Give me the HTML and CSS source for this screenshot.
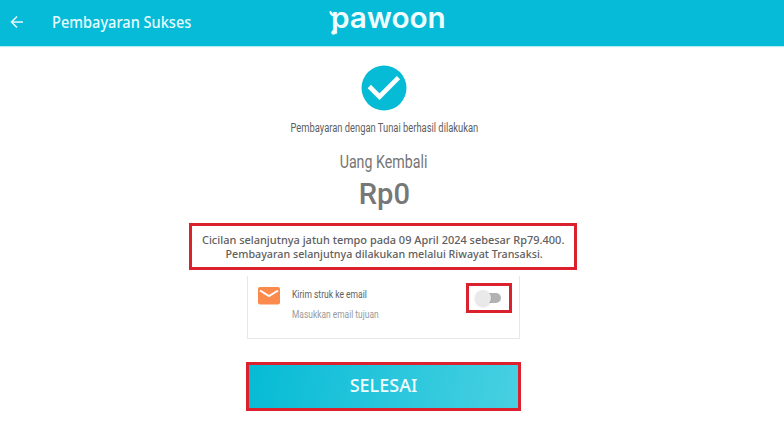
FILE: index.html
```
<!DOCTYPE html>
<html lang="id">
<head>
    <meta charset="UTF-8">
    <meta name="viewport" content="width=device-width, initial-scale=1.0">
    <title>Pembayaran Sukses</title>
    <link rel="stylesheet" href="styles.css">
</head>
<body>
    <header>
        <svg class="back" width="14" height="14" viewBox="0 0 14 14">
            <path d="M13 7H2M7 1.5L1.5 7L7 12.5" fill="none" stroke="#e4fbff" stroke-width="1.6"/>
        </svg>
        <h1>Pembayaran Sukses</h1>
        <div class="logo">
            <span>pawoon</span>
            <svg class="logo-tail" width="9" height="27" viewBox="0 0 9 27">
                <path d="M1.500 4Q2 7 6 7.500" fill="none" stroke="#f0fdff" stroke-width="2.200" stroke-linecap="round"/>
                <circle cx="4.500" cy="24.500" r="2.200" fill="#f0fdff"/>
            </svg>
        </div>
    </header>
    <main>
        <svg class="check" width="46" height="46" viewBox="0 0 46 46">
            <circle cx="23" cy="23" r="22.500" fill="#06bbd5"/>
            <path d="M8.300 21.500L18.500 31.700L37.500 12.700" fill="none" stroke="#fff" stroke-width="4.600"/>
        </svg>
        <p class="message"><span>Pembayaran dengan Tunai berhasil dilakukan</span></p>
        <p class="change-label"><span>Uang Kembali</span></p>
        <p class="change"><span>Rp0</span></p>
        <div class="notice">
            <p><span>Cicilan selanjutnya jatuh tempo pada 09 April 2024 sebesar Rp79.400.</span></p>
            <p><span>Pembayaran selanjutnya dilakukan melalui Riwayat Transaksi.</span></p>
        </div>
        <div class="card">
            <svg class="mail" width="22" height="18" viewBox="0 0 22 18">
                <rect width="22" height="17.500" rx="2" fill="#fb8a4c"/>
                <path d="M2 3.500L11 9L20 3.500" fill="none" stroke="#fff" stroke-width="2"/>
            </svg>
            <div class="card-text">
                <p class="card-title"><span>Kirim struk ke email</span></p>
                <p class="card-hint"><span>Masukkan email tujuan</span></p>
            </div>
            <div class="toggle-frame">
                <div class="toggle"></div>
            </div>
        </div>
        <button class="done"><span>SELESAI</span></button>
    </main>
</body>
</html>
```
FILE: styles.css
```
* {
    box-sizing: border-box;
}

body {
    margin: 0;
    height: 427px;
    overflow: hidden;
    background: #fff;
    font-family: Roboto, sans-serif;
    color: #606060;
}

p, h1 {
    margin: 0;
}

header {
    display: grid;
    grid-template-columns: 42px 278px 1fr;
    align-items: center;
    height: 46px;
    padding-left: 10px;
    background: #06bbd7;
    box-shadow: 0 1px 1px #b5ebf2;
}

.back {
    margin-top: -2px;
}

h1 {
    font: 500 15.5px/20px "Noto Sans", sans-serif;
    color: #e4fbff;
    white-space: nowrap;
    transform: translateY(-1px) scaleX(.94);
    transform-origin: left;
}

.logo {
    position: relative;
    height: 46px;
    font: 600 29px/36px Inter, sans-serif;
    color: #f0fdff;
}

.logo span {
    display: inline-block;
    margin-left: 1px;
    transform: scaleX(1.025);
    transform-origin: left;
}

.logo-tail {
    position: absolute;
    left: -1px;
    top: 8px;
}

main {
    display: flex;
    flex-direction: column;
    align-items: center;
    width: 767px;
    padding-top: 19px;
}

main p {
    white-space: nowrap;
}

main p span {
    display: inline-block;
}

.check {
    flex: none;
    margin-left: 1px;
}

.message {
    margin-top: 9px;
    font-size: 12px;
    line-height: 16px;
    margin-left: 2px;
}

.message span {
    transform: scaleX(.78);
}

.change-label {
    margin-top: 15px;
    font-size: 18px;
    line-height: 22px;
    color: #757575;
}

.change-label span {
    transform: scaleX(.79);
}

.change {
    margin-top: 4px;
    font-size: 30px;
    font-weight: 500;
    line-height: 34px;
    color: #777;
    margin-left: 2px;
}

.change span {
    transform: scaleX(.97);
}

.notice {
    display: flex;
    flex-direction: column;
    align-items: center;
    width: 388px;
    height: 47px;
    margin-top: 12px;
    margin-right: 1px;
    padding-top: 7px;
    border: 3px solid #db212d;
    font: 500 11.5px/13.5px "Noto Sans", sans-serif;
}

.notice span {
    transform: scaleX(.953);
}

.notice p + p span {
    transform: translateX(1px) scaleX(.932);
}

.card {
    display: flex;
    width: 273px;
    height: 63px;
    margin-top: 6px;
    padding-left: 10px;
    border: solid #e8e8e8;
    border-width: 0 1px 1px;
}

.mail {
    margin-top: 11px;
}

.card-text {
    width: 173px;
    margin-left: 12px;
    padding-top: 11px;
}

.card-text p {
    font-size: 11px;
    line-height: 16px;
}

.card-text span {
    transform: scaleX(.775);
    transform-origin: left;
}

.card-text .card-hint {
    margin-top: 4px;
    color: #999;
}

.card-text .card-hint span {
    transform: scaleX(.765);
}

.toggle-frame {
    width: 46px;
    height: 30px;
    margin: 7px 0 0 1px;
    padding: 7px 8px;
    border: 3px solid #db212d;
}

.toggle {
    position: relative;
    width: 24px;
    height: 10px;
    border-radius: 5px;
    background: #b2b2b2;
}

/* knob */
.toggle::before {
    content: "";
    position: absolute;
    left: -2px;
    top: -3px;
    width: 16px;
    height: 16px;
    border-radius: 50%;
    background: #e9e9e9;
    box-shadow: 0 1px 2px rgba(0,0,0,0.15);
}

.done {
    width: 275px;
    height: 49px;
    margin-top: 23px;
    padding: 0;
    border: 3px solid #db212d;
    background: linear-gradient(100deg, #06bbd5, #48d0e2);
    color: #effdff;
    font: 500 18px/41px "Noto Sans", sans-serif;
}

.done span {
    display: inline-block;
    transform: translateY(-1px);
}
```
